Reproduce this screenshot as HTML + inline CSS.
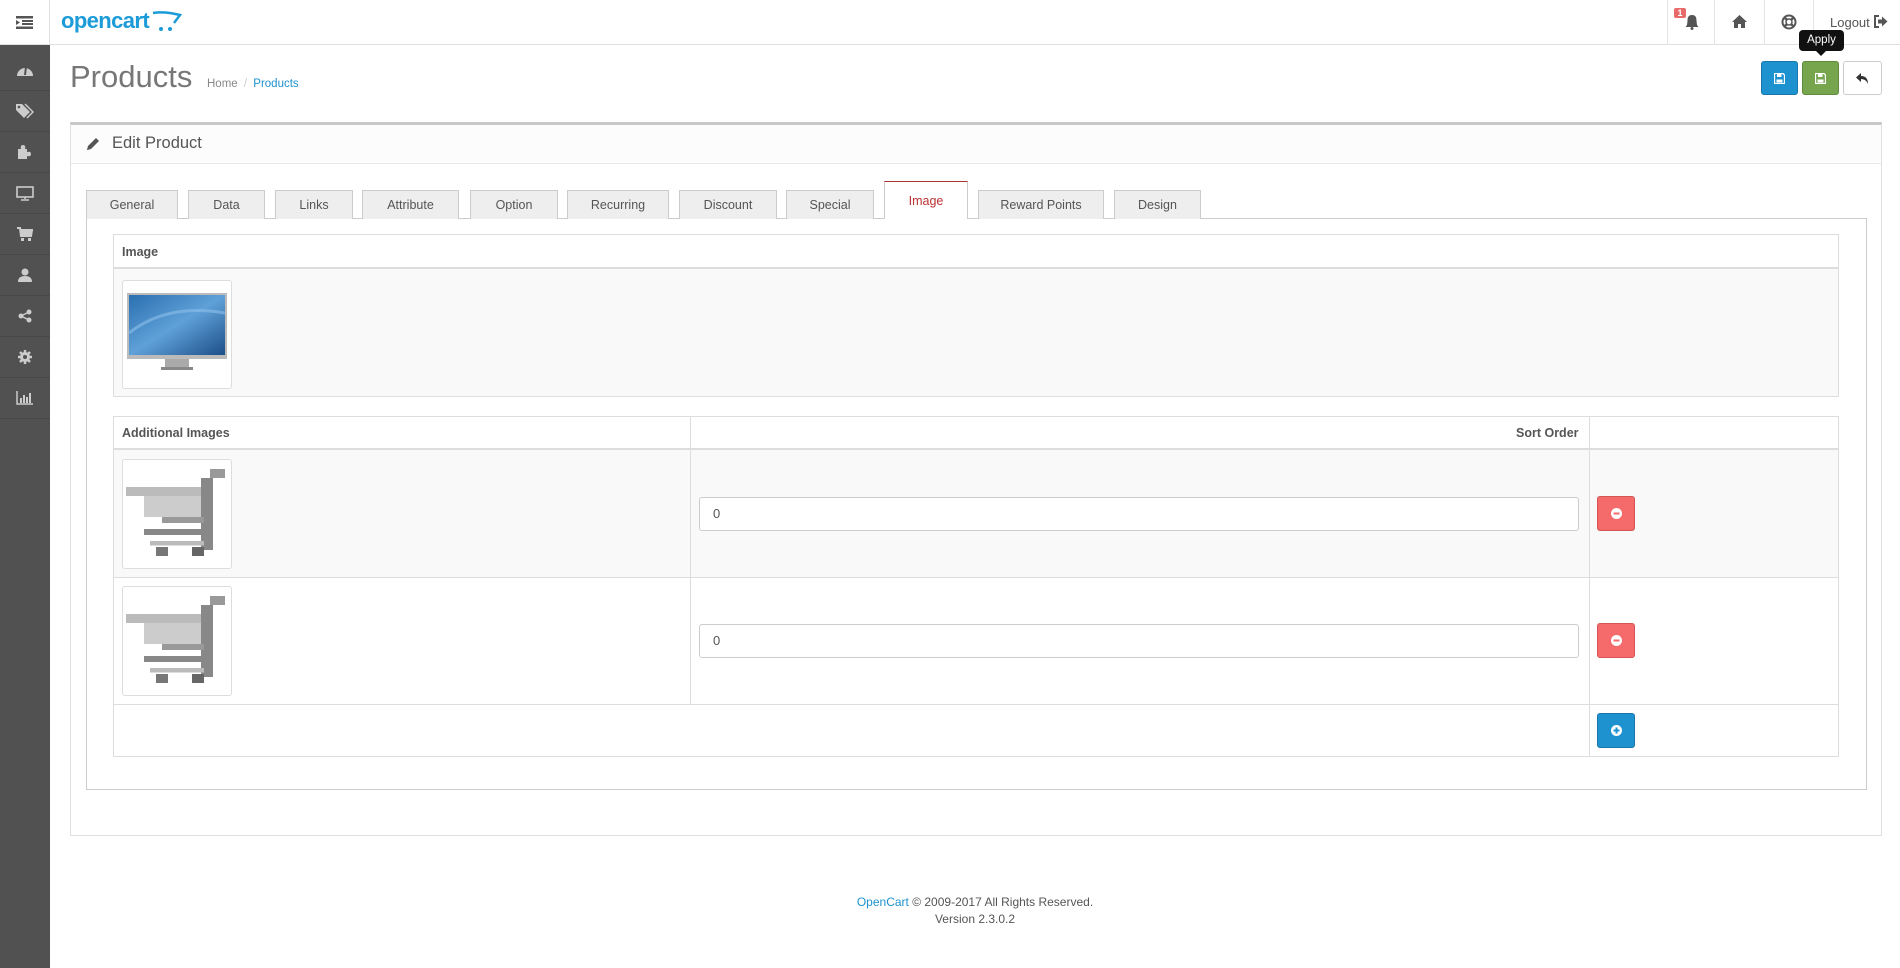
<!DOCTYPE html>
<html><head><meta charset="utf-8"><style>
*{box-sizing:border-box;margin:0;padding:0}
body{width:1900px;height:968px;background:#fff;font-family:"Liberation Sans",sans-serif;color:#666;position:relative;overflow:hidden;font-size:13px}
.a{position:absolute}
#hdr{left:0;top:0;width:1900px;height:45px;border-bottom:1px solid #e0e0e0;background:#fff}
#side{left:0;top:45px;width:50px;height:923px;background:#515151}
.si{position:absolute;left:0;width:50px;height:41px;border-bottom:1px solid #484848;display:flex;align-items:center;justify-content:center}
.tab{position:absolute;top:190px;height:29px;background:#eee;border:1px solid #ccc;border-bottom:none;font-size:12.5px;color:#555;display:flex;align-items:center;justify-content:center}
.btn{position:absolute;border-radius:3px;display:flex;align-items:center;justify-content:center}
.inp{position:absolute;left:699px;width:880px;height:34px;border:1px solid #ccc;border-radius:3px;background:#fff;font-size:13px;color:#555;padding-left:13px;line-height:32px}
.th{font-weight:bold;font-size:12.5px;color:#555}
</style></head><body>
<div id="hdr" class="a">
  <div class="a" style="left:0;top:0;width:50px;height:45px;border-right:1px solid #e0e0e0;display:flex;align-items:center;justify-content:center">
    <svg width="17" height="13" viewBox="0 0 17 13"><rect x="0" y="0" width="17" height="2.5" fill="#555"/><rect x="6" y="4" width="11" height="2" fill="#555"/><rect x="6" y="7" width="11" height="2" fill="#555"/><path d="M0 4 L4 6.5 L0 9Z" fill="#555"/><rect x="0" y="10.5" width="17" height="2.5" fill="#555"/></svg>
  </div>
  <div class="a" style="left:61px;top:8px;font-size:22px;font-weight:bold;color:#1b9bd7;letter-spacing:-0.6px">opencart</div>
  <svg class="a" style="left:152px;top:10px" width="30" height="22" viewBox="0 0 30 22"><path d="M1 3 Q12 1 28 5 L22 13" stroke="#1b9bd7" stroke-width="2.5" fill="none"/><circle cx="9" cy="19" r="2" fill="#1b9bd7"/><circle cx="18" cy="19" r="2" fill="#1b9bd7"/></svg>
  <div class="a" style="left:1667px;top:0;width:1px;height:45px;background:#e5e5e5"></div>
  <div class="a" style="left:1714px;top:0;width:1px;height:45px;background:#e5e5e5"></div>
  <div class="a" style="left:1764px;top:0;width:1px;height:45px;background:#e5e5e5"></div>
  <div class="a" style="left:1813px;top:0;width:1px;height:45px;background:#e5e5e5"></div>
  <div class="a" style="left:1674px;top:8px;width:12px;height:10px;background:#e96a6a;border-radius:2px;color:#fff;font-size:9px;font-weight:bold;text-align:center;line-height:10px">1</div>
  <svg class="a" style="left:1684px;top:14px" width="16" height="16" viewBox="0 0 16 16"><path d="M8 1 C4 1 3.5 4 3.5 7 L3 11 L1.5 13 L14.5 13 L13 11 L12.5 7 C12.5 4 12 1 8 1Z" fill="#555"/><circle cx="8" cy="14.5" r="1.5" fill="#555"/></svg>
  <svg class="a" style="left:1732px;top:15px" width="15" height="13" viewBox="0 0 15 13"><path d="M7.5 0 L15 7 L13 7 L13 13 L9 13 L9 9 L6 9 L6 13 L2 13 L2 7 L0 7Z" fill="#555"/></svg>
  <svg class="a" style="left:1781px;top:14px" width="16" height="16" viewBox="0 0 16 16"><circle cx="8" cy="8" r="6.5" stroke="#555" stroke-width="2" fill="none"/><circle cx="8" cy="8" r="3" stroke="#555" stroke-width="1.5" fill="none"/><path d="M3 3 L6 6 M13 3 L10 6 M3 13 L6 10 M13 13 L10 10" stroke="#555" stroke-width="2.5"/></svg>
  <div class="a" style="left:1830px;top:15px;font-size:13px;color:#555">Logout</div>
  <svg class="a" style="left:1874px;top:15px" width="14" height="13" viewBox="0 0 14 13"><path d="M5 1 L1 1 L1 12 L5 12" stroke="#555" stroke-width="2" fill="none"/><path d="M4 4.5 L8 4.5 L8 1.5 L13.5 6.5 L8 11.5 L8 8.5 L4 8.5Z" fill="#555"/></svg>
</div>
<div id="side" class="a">
  <div class="si" style="top:5px"><svg width="18" height="14" viewBox="0 0 18 14"><path d="M1 13 A8 8 0 1 1 17 13Z" fill="#ccc"/><path d="M9 12 L10 4" stroke="#515151" stroke-width="2"/></svg></div>
  <div class="si" style="top:46px"><svg width="18" height="16" viewBox="0 0 18 16"><path d="M0 1 L6 1 L14 9 L8 15 L0 7Z" fill="#ccc"/><path d="M9 1 L17 9 L11 15" stroke="#ccc" stroke-width="1.5" fill="none"/><circle cx="3" cy="4" r="1.3" fill="#515151"/></svg></div>
  <div class="si" style="top:87px"><svg width="16" height="14" viewBox="0 0 16 14"><path d="M1 4 L4 4 Q3 0 6 0 Q9 0 8 4 L10 4 L10 7 Q14 6 14 9 Q14 12 10 11 L10 14 L1 14Z" fill="#ccc"/></svg></div>
  <div class="si" style="top:128px"><svg width="18" height="15" viewBox="0 0 18 15"><rect x="1" y="1" width="16" height="10" stroke="#ccc" stroke-width="1.6" fill="none"/><path d="M9 11 L9 13 M5 14 L13 14" stroke="#ccc" stroke-width="1.5"/></svg></div>
  <div class="si" style="top:169px"><svg width="16" height="14" viewBox="0 0 16 14"><path d="M0 1 L3 1 L4 9 L14 9 L15 3 L4 3" stroke="#ccc" stroke-width="2" fill="#ccc"/><rect x="4" y="11" width="3" height="3" fill="#ccc"/><rect x="11" y="11" width="3" height="3" fill="#ccc"/></svg></div>
  <div class="si" style="top:210px"><svg width="14" height="14" viewBox="0 0 14 14"><circle cx="7" cy="4" r="3.5" fill="#ccc"/><path d="M0 14 Q0 8 7 8 Q14 8 14 14Z" fill="#ccc"/></svg></div>
  <div class="si" style="top:251px"><svg width="14" height="14" viewBox="0 0 14 14"><circle cx="11" cy="3" r="2.5" fill="#ccc"/><circle cx="3" cy="7" r="2.5" fill="#ccc"/><circle cx="11" cy="11" r="2.5" fill="#ccc"/><path d="M11 3 L3 7 L11 11" stroke="#ccc" stroke-width="1.5" fill="none"/></svg></div>
  <div class="si" style="top:292px"><svg width="14" height="14" viewBox="0 0 14 14"><circle cx="7" cy="7" r="5" fill="#ccc"/><path d="M7 0 L7 14 M0 7 L14 7 M2 2 L12 12 M12 2 L2 12" stroke="#ccc" stroke-width="2.5"/><circle cx="7" cy="7" r="2" fill="#515151"/></svg></div>
  <div class="si" style="top:333px"><svg width="18" height="14" viewBox="0 0 18 14"><path d="M1 0 L1 13 L17 13" stroke="#ccc" stroke-width="1.5" fill="none"/><rect x="4" y="7" width="2" height="5" fill="#ccc"/><rect x="7" y="4" width="2" height="8" fill="#ccc"/><rect x="10" y="6" width="2" height="6" fill="#ccc"/><rect x="13" y="2" width="2" height="10" fill="#ccc"/></svg></div>
</div>

<div class="a" style="left:70px;top:59px;font-size:31px;color:#777">Products</div>
<div class="a" style="left:207px;top:78px;font-size:11.5px;color:#888">Home <span style="color:#ccc;padding:0 3px">/</span> <span style="color:#1e91cf">Products</span></div>

<div class="btn" style="left:1761px;top:61px;width:37px;height:34px;background:#1e91cf;border:1px solid #1978ab"><svg width="11" height="11" viewBox="0 0 11 11"><path d="M0.5 0.5 H9 L10.5 2 V10.5 H0.5Z" stroke="#fff" stroke-width="1.3" fill="none"/><rect x="3" y="1" width="4.5" height="3" fill="#fff"/><rect x="2.5" y="6.5" width="6" height="3" fill="#fff"/></svg></div>
<div class="btn" style="left:1802px;top:61px;width:37px;height:34px;background:#76a54d;border:1px solid #5e8a3c"><svg width="11" height="11" viewBox="0 0 11 11"><path d="M0.5 0.5 H9 L10.5 2 V10.5 H0.5Z" stroke="#fff" stroke-width="1.3" fill="none"/><rect x="3" y="1" width="4.5" height="3" fill="#fff"/><rect x="2.5" y="6.5" width="6" height="3" fill="#fff"/></svg></div>
<div class="btn" style="left:1843px;top:61px;width:39px;height:34px;background:#fff;border:1px solid #ccc"><svg width="13" height="11" viewBox="0 0 13 11"><path d="M5 0 L0 4.5 L5 9 L5 6 Q10 6 12 11 Q12 3 5 3Z" fill="#333"/></svg></div>
<div class="a" style="left:1799px;top:30px;width:45px;height:21px;background:#111;border-radius:4px;color:#fff;font-size:11.5px;text-align:center;line-height:21px">Apply</div>
<div class="a" style="left:1816px;top:51px;width:0;height:0;border-left:5px solid transparent;border-right:5px solid transparent;border-top:5px solid #111"></div>

<div class="a" style="left:70px;top:122px;width:1812px;height:714px;border:1px solid #e0e0e0;border-top:3px solid #c8c8c8"></div>
<div class="a" style="left:71px;top:125px;width:1810px;height:39px;background:#fcfcfc;border-bottom:1px solid #e8e8e8"></div>
<svg class="a" style="left:86px;top:137px" width="14" height="14" viewBox="0 0 14 14"><path d="M1 13 L2 9 L10 1 L13 4 L5 12Z" fill="#555"/><path d="M1 13 L2 10 L4 12Z" fill="#555"/></svg>
<div class="a" style="left:112px;top:134px;font-size:16.5px;color:#555">Edit Product</div>

<div class="a" style="left:86px;top:218px;width:1781px;height:572px;border:1px solid #ccc;border-top:1px solid #ccc"></div>
<div class="tab" style="left:86px;width:92px">General</div>
<div class="tab" style="left:188px;width:77px">Data</div>
<div class="tab" style="left:275px;width:78px">Links</div>
<div class="tab" style="left:362px;width:97px">Attribute</div>
<div class="tab" style="left:470px;width:88px">Option</div>
<div class="tab" style="left:567px;width:102px">Recurring</div>
<div class="tab" style="left:679px;width:98px">Discount</div>
<div class="tab" style="left:786px;width:88px">Special</div>
<div class="tab" style="left:884px;top:181px;width:84px;height:38px;background:#fff;border-top:1px solid #a33;color:#b33">Image</div>
<div class="tab" style="left:978px;width:126px">Reward Points</div>
<div class="tab" style="left:1114px;width:87px">Design</div>

<div class="a" style="left:113px;top:234px;width:1726px;height:163px;border:1px solid #ddd;background:#f9f9f9"></div>
<div class="a" style="left:114px;top:235px;width:1724px;height:34px;background:#fff;border-bottom:2px solid #ddd"></div>
<div class="a th" style="left:122px;top:245px">Image</div>
<div class="a" style="left:122px;top:280px;width:110px;height:109px;border:1px solid #ddd;border-radius:3px;background:#fff"></div>
<svg class="a" style="left:127px;top:293px" width="100" height="82" viewBox="0 0 100 82">
<defs><linearGradient id="g" x1="0" y1="0" x2="1" y2="1"><stop offset="0" stop-color="#2a6fb0"/><stop offset="0.5" stop-color="#5fa0d8"/><stop offset="1" stop-color="#1c4f88"/></linearGradient></defs>
<rect x="0" y="0" width="100" height="66" fill="#bbb"/><rect x="2" y="2" width="96" height="60" fill="url(#g)"/><path d="M2 40 Q40 10 98 20" stroke="#8cc0ea" stroke-width="3" fill="none" opacity="0.6"/><rect x="38" y="66" width="24" height="8" fill="#aaa"/><rect x="34" y="74" width="32" height="3" fill="#888"/></svg>

<div class="a" style="left:113px;top:416px;width:1726px;height:341px;border:1px solid #ddd"></div>
<div class="a" style="left:114px;top:448px;width:1724px;height:2px;background:#ddd"></div>
<div class="a" style="left:114px;top:450px;width:1724px;height:127px;background:#f9f9f9"></div>
<div class="a" style="left:114px;top:577px;width:1724px;height:1px;background:#ddd"></div>
<div class="a" style="left:114px;top:704px;width:1724px;height:1px;background:#ddd"></div>
<div class="a" style="left:690px;top:417px;width:1px;height:288px;background:#ddd"></div>
<div class="a" style="left:1589px;top:417px;width:1px;height:340px;background:#ddd"></div>
<div class="a th" style="left:122px;top:426px">Additional Images</div>
<div class="a th" style="left:1516px;top:426px">Sort Order</div>

<div class="a" style="left:122px;top:459px;width:110px;height:110px;border:1px solid #ddd;border-radius:3px;background:#fff"></div>
<div class="a" style="left:122px;top:586px;width:110px;height:110px;border:1px solid #ddd;border-radius:3px;background:#fff"></div>
<svg class="a" style="left:126px;top:469px" width="102" height="90" viewBox="0 0 34 30"><g><rect x="0" y="6" width="28" height="3" fill="#bbb"/><rect x="28" y="0" width="5" height="3" fill="#999"/><rect x="25" y="3" width="4" height="24" fill="#888"/><rect x="6" y="9" width="19" height="7" fill="#ccc"/><rect x="12" y="16" width="14" height="2" fill="#999"/><rect x="6" y="20" width="20" height="2" fill="#888"/><rect x="8" y="24" width="18" height="1.5" fill="#bbb"/><rect x="10" y="26" width="4" height="3" fill="#777"/><rect x="22" y="26" width="4" height="3" fill="#666"/></g></svg>
<svg class="a" style="left:126px;top:596px" width="102" height="90" viewBox="0 0 34 30"><g><rect x="0" y="6" width="28" height="3" fill="#bbb"/><rect x="28" y="0" width="5" height="3" fill="#999"/><rect x="25" y="3" width="4" height="24" fill="#888"/><rect x="6" y="9" width="19" height="7" fill="#ccc"/><rect x="12" y="16" width="14" height="2" fill="#999"/><rect x="6" y="20" width="20" height="2" fill="#888"/><rect x="8" y="24" width="18" height="1.5" fill="#bbb"/><rect x="10" y="26" width="4" height="3" fill="#777"/><rect x="22" y="26" width="4" height="3" fill="#666"/></g></svg>

<div class="inp" style="top:497px">0</div>
<div class="inp" style="top:624px">0</div>
<div class="btn" style="left:1597px;top:496px;width:38px;height:35px;background:#f56b6b;border:1px solid #d65454"><svg width="11" height="11" viewBox="0 0 11 11"><circle cx="5.5" cy="5.5" r="5.5" fill="#fff"/><rect x="2.5" y="4.5" width="6" height="2" fill="#f56b6b"/></svg></div>
<div class="btn" style="left:1597px;top:623px;width:38px;height:35px;background:#f56b6b;border:1px solid #d65454"><svg width="11" height="11" viewBox="0 0 11 11"><circle cx="5.5" cy="5.5" r="5.5" fill="#fff"/><rect x="2.5" y="4.5" width="6" height="2" fill="#f56b6b"/></svg></div>
<div class="btn" style="left:1597px;top:713px;width:38px;height:35px;background:#1e91cf;border:1px solid #1978ab"><svg width="11" height="11" viewBox="0 0 11 11"><circle cx="5.5" cy="5.5" r="5.5" fill="#fff"/><rect x="2.5" y="4.5" width="6" height="2" fill="#1e91cf"/><rect x="4.5" y="2.5" width="2" height="6" fill="#1e91cf"/></svg></div>

<div class="a" style="left:0;width:1900px;padding-left:50px;top:894px;text-align:center;font-size:12px;color:#555;line-height:17px"><span style="color:#1e91cf">OpenCart</span> © 2009-2017 All Rights Reserved.<br>Version 2.3.0.2</div>
</body></html>
